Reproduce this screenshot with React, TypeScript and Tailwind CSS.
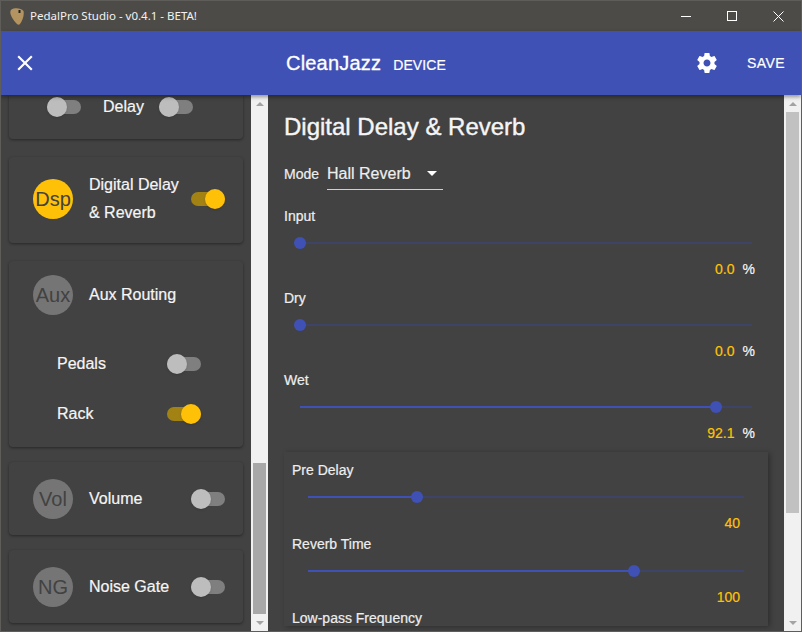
const FONT = "font-['Liberation_Sans',Arial,sans-serif]";

function Toggle({ on }: { on?: boolean }) {
  return (
    <div className="relative flex h-5 w-[34px] shrink-0 items-center">
      <div className={on ? "h-3.5 w-[34px] rounded-full bg-[#a38214]" : "h-3.5 w-[34px] rounded-full bg-[#7f7f7f]"} />
      <div
        className={
          on
            ? "absolute top-0 left-[14px] size-5 rounded-full bg-[#ffc107] shadow"
            : "absolute top-0 left-0 size-5 rounded-full bg-[#bdbdbd] shadow"
        }
      />
    </div>
  );
}

function Avatar({ label, on }: { label: string; on?: boolean }) {
  return (
    <div
      className={
        on
          ? "flex size-10 shrink-0 items-center justify-center rounded-full bg-[#ffc107] text-xl text-[#424242] [-webkit-text-stroke-width:0]"
          : "flex size-10 shrink-0 items-center justify-center rounded-full bg-[#757575] text-xl text-[#424242] [-webkit-text-stroke-width:0]"
      }
    >
      {label}
    </div>
  );
}

function Card({ avatar, label }: { avatar: string; label: string }) {
  return (
    <div className="flex h-[73px] items-center rounded bg-[#424242] pr-[18px] pl-6 shadow-[0_1px_3px_rgba(0,0,0,0.4)]">
      <Avatar label={avatar} />
      <span className="ml-4 flex-1 text-base text-[#f5f5f5]">{label}</span>
      <Toggle />
    </div>
  );
}

function Scrollbar({ before, thumb, after }: { before: string; thumb: string; after: string }) {
  return (
    <div className="flex w-[17px] shrink-0 flex-col items-center bg-[#f1f1f1]">
      <div className="flex h-[17px] w-full shrink-0 items-center justify-center">
        <div className="size-0 border-x-4 border-b-4 border-x-transparent border-b-[#a3a3a3]" />
      </div>
      <div className={before} />
      <div className={thumb} />
      <div className={after} />
      <div className="flex h-[17px] w-full shrink-0 items-center justify-center">
        <div className="size-0 border-x-4 border-t-4 border-x-transparent border-t-[#a3a3a3]" />
      </div>
    </div>
  );
}

function Slider({
  label,
  value,
  unit,
  pct,
}: {
  label: string;
  value: string;
  unit?: string;
  pct: number;
}) {
  return (
    <div>
      <div className="text-sm leading-4 text-[#eeeeee]">{label}</div>
      <div className="mt-[13px] px-4">
        <div className="relative h-3 w-full">
          <div className="absolute top-[5px] h-0.5 w-full bg-[#3e4468]" />
          <div className="absolute top-[5px] h-0.5 bg-[#3f51b5]" style={{ width: `${pct}%` }} />
          <div
            className="absolute top-0 -ml-1.5 size-3 rounded-full bg-[#3f51b5]"
            style={{ left: `${pct}%` }}
          />
        </div>
      </div>
      <div className={unit ? "mt-3 flex h-4 items-center justify-end pr-[13px] text-sm" : "mt-3 flex h-4 items-center justify-end pr-5 text-sm"}>
        <span className="text-[#ffc107]">{value}</span>
        {unit && <span className="ml-2 text-[#f5f5f5]">{unit}</span>}
      </div>
    </div>
  );
}

export default function App() {
  return (
    <div className={`flex h-[632px] w-[802px] flex-col overflow-hidden border border-[#5f5d59] bg-[#424242] [-webkit-text-stroke-width:0.2px] ${FONT}`}>
      {/* Title bar */}
      <div className="flex h-[30px] shrink-0 items-center bg-[#4d4b47] text-[#f2f2f2]">
        <svg viewBox="0 0 14 17" className="ml-[9px] h-[17px] w-[14px]">
          <path d="M1.5 1.5 C4 -0.5 11 -0.5 13.5 3 C14.5 7 12.5 13 10 16 C9 17 8 17 7 16 C4 13 0.5 8 0.3 4.5 C0.3 3 0.7 2 1.5 1.5 Z" fill="#b3935f" />
          <rect x="8.5" y="2" width="2" height="3" fill="#222" />
        </svg>
        <span className="ml-1.5 font-['Noto_Sans',sans-serif] text-[11.5px] [-webkit-text-stroke-width:0]">PedalPro Studio - v0.4.1 - BETA!</span>
        <div className="ml-auto flex h-full items-center">
          <div className="flex h-full w-[46px] items-center justify-center">
            <svg width="10" height="10" viewBox="0 0 10 10" className="stroke-white">
              <path d="M0 5.5 H10" strokeWidth="1" />
            </svg>
          </div>
          <div className="flex h-full w-[46px] items-center justify-center">
            <svg width="10" height="10" viewBox="0 0 10 10" className="fill-none stroke-white">
              <rect x="0.5" y="0.5" width="9" height="9" strokeWidth="1" />
            </svg>
          </div>
          <div className="flex h-full w-[46px] items-center justify-center">
            <svg width="11" height="11" viewBox="0 0 11 11" className="stroke-white">
              <path d="M0.5 0.5 L10.5 10.5 M10.5 0.5 L0.5 10.5" strokeWidth="1" />
            </svg>
          </div>
        </div>
      </div>

      {/* App bar */}
      <div className="z-10 flex h-16 shrink-0 items-center bg-[#3f51b5] text-white shadow-[0_2px_4px_rgba(0,0,0,0.4)]">
        <svg viewBox="0 0 24 24" className="ml-[11px] size-[26px] fill-white">
          <path d="M19 6.41 17.59 5 12 10.59 6.41 5 5 6.41 10.59 12 5 17.59 6.41 19 12 13.41 17.59 19 19 17.59 13.41 12z" />
        </svg>
        <div className="ml-[248px] flex items-baseline">
          <span className="text-xl tracking-[0.2px] [-webkit-text-stroke-width:0.3px]">CleanJazz</span>
          <span className="ml-3 text-sm tracking-[0.1px]">DEVICE</span>
        </div>
        <svg viewBox="0 0 24 24" className="mr-7 ml-auto size-6 fill-white">
          <path d="M19.43 12.98c.04-.32.07-.64.07-.98s-.03-.66-.07-.98l2.11-1.65c.19-.15.24-.42.12-.64l-2-3.46c-.12-.22-.39-.3-.61-.22l-2.49 1c-.52-.4-1.08-.73-1.69-.98l-.38-2.65C14.46 2.18 14.25 2 14 2h-4c-.25 0-.46.18-.49.42l-.38 2.65c-.61.25-1.17.59-1.69.98l-2.49-1c-.23-.09-.49 0-.61.22l-2 3.46c-.13.22-.07.49.12.64l2.11 1.65c-.04.32-.07.65-.07.98s.03.66.07.98l-2.11 1.65c-.19.15-.24.42-.12.64l2 3.46c.12.22.39.3.61.22l2.49-1c.52.4 1.08.73 1.69.98l.38 2.65c.03.24.24.42.49.42h4c.25 0 .46-.18.49-.42l.38-2.65c.61-.25 1.17-.59 1.69-.98l2.49 1c.23.09.49 0 .61-.22l2-3.46c.12-.22.07-.49-.12-.64l-2.11-1.65zM12 15.5c-1.93 0-3.5-1.57-3.5-3.5s1.57-3.5 3.5-3.5 3.5 1.57 3.5 3.5-1.57 3.5-3.5 3.5z" />
        </svg>
        <span className="mr-4 text-sm tracking-[0.4px]">SAVE</span>
      </div>

      {/* Body */}
      <div className="flex min-h-0 flex-1">
        {/* Left list */}
        <div className="flex w-[250px] shrink-0 flex-col gap-[18px] overflow-hidden px-2">
          <div className="flex h-11 shrink-0 items-start rounded-b bg-[#424242] pl-[38px] shadow-[0_1px_3px_rgba(0,0,0,0.4)]">
            <div className="flex items-center">
              <Toggle />
              <span className="mr-[15px] ml-[22px] text-base text-[#f5f5f5]">Delay</span>
              <Toggle />
            </div>
          </div>
          <div className="flex h-[86px] shrink-0 items-center rounded bg-[#424242] pr-[18px] pb-0.5 pl-6 shadow-[0_1px_3px_rgba(0,0,0,0.4)]">
            <Avatar label="Dsp" on />
            <span className="ml-4 flex-1 text-base leading-7 text-[#f5f5f5]">
              Digital Delay
              <br />& Reverb
            </span>
            <Toggle on />
          </div>
          <div className="flex h-[186px] shrink-0 flex-col rounded bg-[#424242] pr-[18px] pl-6 shadow-[0_1px_3px_rgba(0,0,0,0.4)]">
            <div className="mt-3.5 flex items-center">
              <Avatar label="Aux" />
              <span className="ml-4 text-base text-[#f5f5f5]">Aux Routing</span>
            </div>
            <div className="mt-[37px] flex items-center justify-between pr-6">
              <span className="ml-6 text-base text-[#f5f5f5]">Pedals</span>
              <Toggle />
            </div>
            <div className="mt-[26px] flex items-center justify-between pr-6">
              <span className="ml-6 text-base text-[#f5f5f5]">Rack</span>
              <Toggle on />
            </div>
          </div>
          <div className="-mt-[3px] flex shrink-0 flex-col gap-[15px]">
            <Card avatar="Vol" label="Volume" />
            <Card avatar="NG" label="Noise Gate" />
          </div>
        </div>
        <Scrollbar before="h-[351px] w-full" thumb="h-[151px] w-[13px] bg-[#a8a8a8]" after="flex-1" />

        {/* Detail panel */}
        <div className="min-w-0 flex-1 overflow-hidden px-4">
          <h1 className="mt-[18px] text-2xl leading-7 text-[#f5f5f5] [-webkit-text-stroke-width:0.4px]">Digital Delay &amp; Reverb</h1>
          <div className="mt-[17px] flex items-center">
            <span className="text-sm text-[#eeeeee]">Mode</span>
            <div className="ml-2 flex h-8 w-[116px] items-center justify-between border-b border-[#d0d0d0] text-base text-[#eeeeee]">
              <span>Hall Reverb</span>
              <div className="mr-1.5 size-0 border-x-[5px] border-t-[5px] border-x-transparent border-t-white" />
            </div>
          </div>
          <div className="mt-[18px] flex flex-col gap-[13px]">
            <Slider label="Input" value="0.0" unit="%" pct={0} />
            <Slider label="Dry" value="0.0" unit="%" pct={0} />
            <Slider label="Wet" value="92.1" unit="%" pct={92.1} />
          </div>
          <div className="mt-[11px] flex flex-col gap-[5px] bg-[#424242] px-2 pt-2.5 shadow-[2px_1px_5px_rgba(0,0,0,0.3)]">
            <Slider label="Pre Delay" value="40" pct={25} />
            <Slider label="Reverb Time" value="100" pct={74.8} />
            <div className="text-sm leading-4 text-[#eeeeee]">Low-pass Frequency</div>
          </div>
        </div>
        <Scrollbar before="h-0 w-full" thumb="h-[401px] w-[13px] bg-[#c1c1c1]" after="flex-1" />
      </div>
    </div>
  );
}
